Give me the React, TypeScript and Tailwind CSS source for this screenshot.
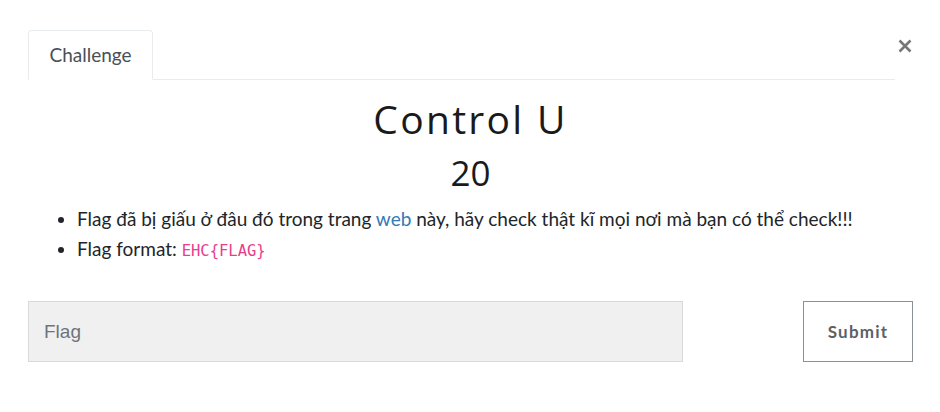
import React from "react";

export default function App() {
  return (
    <div className="h-[412px] w-[940px] bg-white font-['Lato','Open_Sans',sans-serif] text-[#212529]">
      <div className="pl-[28px] pr-[27px] pt-[30px]">
        {/* Tabs + close */}
        <div className="flex items-start">
          <div className="flex flex-1 border-b border-[#e9ecef]">
            <div className="-mb-px flex h-[50px] w-[125px] items-center justify-center rounded-t-[4px] border border-b-white border-[#e9ecef] bg-white text-[19px] text-[#495057]">
              Challenge
            </div>
          </div>
          <button
            type="button"
            aria-label="Close"
            className="ml-[2px] mt-[8px] flex h-[16px] w-[16px] items-center justify-center text-[#777]"
          >
            <svg width="14" height="14" viewBox="0 0 14 14">
              <path d="M1.5 1.5 L12.5 12.5 M12.5 1.5 L1.5 12.5" stroke="currentColor" strokeWidth="2.6" />
            </svg>
          </button>
        </div>

        {/* Title */}
        <h2 className="mt-[17px] text-center font-['Open_Sans',sans-serif] text-[39px] leading-[44px] tracking-[2.3px] text-[#1a1a1a]">
          Control U
        </h2>
        <h3 className="mt-[11px] text-center font-['Open_Sans',sans-serif] text-[35px] leading-[42px] text-[#1a1a1a]">
          20
        </h3>

        {/* Description */}
        <ul className="mt-[10px] list-disc pl-[49px] text-[19px] leading-[30px]">
          <li>
            Flag đã bị giấu ở đâu đó trong trang{" "}
            <a href="#" className="text-[#337ab7]">
              web
            </a>{" "}
            này, hãy check thật kĩ mọi nơi mà bạn có thể check!!!
          </li>
          <li>
            Flag format:{" "}
            <code className="font-['DejaVu_Sans_Mono',monospace] text-[15.5px] leading-none text-[#e83e8c]">EHC{"{FLAG}"}</code>
          </li>
        </ul>

        {/* Form */}
        <div className="mt-[37px] flex items-center justify-between">
          <input
            placeholder="Flag"
            className="h-[61px] w-[655px] border border-[#d9d9d9] bg-[#f0f0f0] px-[15px] font-['Liberation_Sans',sans-serif] text-[19px] text-[#495057] placeholder:text-[#6c757d] outline-none"
          />
          <button
            type="button"
            className="h-[61px] w-[110px] border border-[#8a9096] bg-white text-[17px] font-bold tracking-[1.2px] text-[#5b6168]"
          >
            Submit
          </button>
        </div>
      </div>
    </div>
  );
}
